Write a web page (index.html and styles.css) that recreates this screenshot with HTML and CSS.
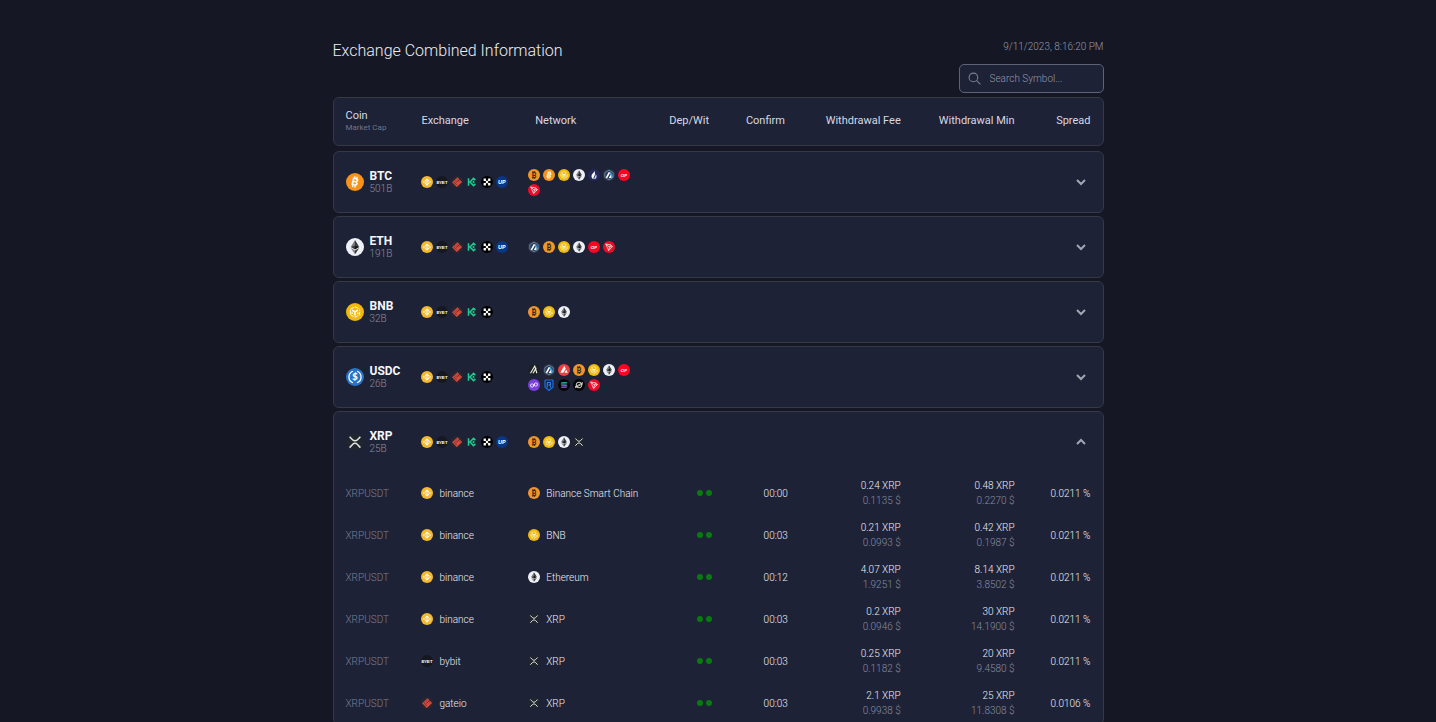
FILE: index.html
```html
<!DOCTYPE html>
<html lang="en">
<head>
<meta charset="utf-8">
<meta name="viewport" content="width=device-width, initial-scale=1">
<title>Exchange Combined Information</title>
<link rel="stylesheet" href="styles.css">
</head>
<body>
<svg class="sprite" aria-hidden="true">
  <symbol id="bitcoin" viewBox="0 0 24 24"><circle cx="12" cy="12" r="12" fill="#f7931a"/><g transform="rotate(13 12 12)" fill="#fff"><text class="mark" x="12" y="17" font-size="14">B</text><path d="M9.600 4.500h1.600v3H9.600zM12.600 4.500h1.600v3h-1.600zM9.600 16.500h1.600v3H9.600zM12.600 16.500h1.600v3h-1.600z"/></g></symbol>
  <symbol id="bsc" viewBox="0 0 24 24"><circle cx="12" cy="12" r="12" fill="#f0962b"/><g fill="#39290f"><text class="mark" x="12" y="17" font-size="14">B</text><path d="M9 4h1.800v4H9zM12.500 4h1.800v4h-1.800zM9 16h1.800v4H9zM12.500 16h1.800v4h-1.800z"/></g></symbol>
  <symbol id="bnb" viewBox="0 0 24 24"><circle cx="12" cy="12" r="12" fill="#f0b90b"/><path d="M6 8.200L12 5l6 3.200M5.800 9.500v6L12 19l6.200-3.500v-6" fill="none" stroke="#fff" stroke-width="1.300" stroke-dasharray="5 1.200"/><path d="M8 9.500l4 2.300 4-2.300M12 11.500v5M8.200 12.800v2M15.800 12.800v2" fill="none" stroke="#fff" stroke-width="2"/></symbol>
  <symbol id="ethereum" viewBox="0 0 24 24"><circle cx="12" cy="12" r="12" fill="#eef1f8"/><path d="M12 2.500L6.300 12 12 9.400z" fill="#77797c"/><path d="M12 2.500L17.700 12 12 9.400z" fill="#363739"/><path d="M6.300 12L12 9.400v6z" fill="#3b3c3d"/><path d="M17.700 12L12 9.400v6z" fill="#121314"/><path d="M6.300 13.300L12 21.500v-5z" fill="#808284"/><path d="M17.700 13.300L12 21.500v-5z" fill="#373839"/></symbol>
  <symbol id="usdc" viewBox="0 0 24 24"><circle cx="12" cy="12" r="12" fill="#2775ca"/><path d="M9.300 4.300a8.200 8.200 0 0 0 0 15.400M14.700 4.300a8.200 8.200 0 0 1 0 15.400" fill="none" stroke="#fff" stroke-width="1.700"/><text class="mark" x="12" y="16.500" font-size="12.500" fill="#fff">$</text></symbol>
  <symbol id="xrp" viewBox="0 0 24 24"><circle cx="12" cy="12" r="12" fill="#20252f"/><path d="M4.800 5l3.900 4.100a4.600 4.600 0 0 0 6.600 0L19.200 5M4.800 19.500l3.900-4.300a4.600 4.600 0 0 1 6.600 0l3.900 4.300" fill="none" stroke="#dfe5dc" stroke-width="2"/></symbol>
  <symbol id="binance" viewBox="0 0 24 24"><circle cx="12" cy="12" r="12" fill="#f3ba2f"/><path d="M8.200 10.300L12 6.500l3.800 3.800M8.200 13.700l3.800 3.800 3.800-3.800" fill="none" stroke="#fff" stroke-width="2.200"/><path d="M12 10l2 2-2 2-2-2zM6 10.200L7.800 12 6 13.800 4.200 12zM18 10.200l1.800 1.800-1.800 1.800-1.800-1.800z" fill="#fff"/></symbol>
  <symbol id="bybit" viewBox="0 0 24 24"><circle cx="12" cy="12" r="12" fill="#16181f"/><text class="mark" x="12" y="15" font-size="7.600" fill="#fff">BYB<tspan fill="#f7a600">I</tspan>T</text></symbol>
  <symbol id="gateio" viewBox="0 0 24 24"><circle cx="12" cy="12" r="12" fill="#2a2630"/><path d="M14 3.500L4 12.500l7.500 7.800 9-8.300-3-3-6.500 6-2.500-2.600L16 5.500M11.500 17.500l6-5.500" fill="none" stroke="#d94a3d" stroke-width="2.400"/></symbol>
  <symbol id="kucoin" viewBox="0 0 24 24"><circle cx="12" cy="12" r="12" fill="#1c2632"/><path d="M5 4.500v15M5.500 12h3M18.800 8.300L15 4.800 8 12l7 7.200 3.800-3.500" fill="none" stroke="#23c993" stroke-width="3"/><path d="M15 9.400l2.600 2.600-2.600 2.600-2.600-2.600z" fill="#23c993"/></symbol>
  <symbol id="okx" viewBox="0 0 24 24"><circle cx="12" cy="12" r="12" fill="#000"/><path d="M5.200 5.200h4.600v4.600H5.200zM14.200 5.200h4.600v4.600h-4.600zM9.700 9.700h4.600v4.600H9.700zM5.200 14.200h4.600v4.600H5.200zM14.200 14.200h4.600v4.600h-4.600z" fill="#fff"/></symbol>
  <symbol id="upbit" viewBox="0 0 24 24"><circle cx="12" cy="12" r="12" fill="#093687"/><text class="mark slanted" x="11.500" y="16" font-size="12" fill="#fff">UP</text></symbol>
  <symbol id="optimism" viewBox="0 0 24 24"><circle cx="12" cy="12" r="12" fill="#ff0420"/><text class="mark slanted" x="11.800" y="15.300" font-size="9" fill="#fff">OP</text></symbol>
  <symbol id="heco" viewBox="0 0 24 24"><circle cx="12" cy="12" r="12" fill="#24285a"/><path d="M12.500 3.500c.5 4-5.500 6-5.500 11 0 3 1.800 5 4 6-1-4 3-7 3-11 0-2.500-.5-4.500-1.500-6z" fill="#fff"/><path d="M15.500 10c3 4 2 9-2.500 10.500-1.500-3.500 2.800-5.500 2.500-10.500z" fill="#d6dcf5"/></symbol>
  <symbol id="arbitrum" viewBox="0 0 24 24"><circle cx="12" cy="12" r="12" fill="#2d374b"/><path d="M12 2.500l8.300 4.700v9.600L12 21.500l-8.300-4.700V7.200z" fill="#263b54" stroke="#8299b0" stroke-width="1.400"/><path d="M5.500 17L11 6.500h4L8.200 18.500zM11.300 18.500l3.800-7 3 5.200-1.500 1" fill="#fff"/><path d="M13.500 9.500l2-3 4 7.500v2.700l-1.800.8z" fill="#3fa9ee"/></symbol>
  <symbol id="tron" viewBox="0 0 24 24"><circle cx="12" cy="12" r="12" fill="#ef0a27"/><path d="M5.500 6l9.800 1.800 3.500 3.300-7.500 8zM5.500 6l7.300 6.200 6-1.100M12.800 12.200l2.500-4.400M12.800 12.200l-1.500 6.900" fill="none" stroke="#fff" stroke-width="1.400" stroke-linejoin="round"/></symbol>
  <symbol id="algorand" viewBox="0 0 24 24"><circle cx="12" cy="12" r="12" fill="#1b2028"/><path d="M5 18.500L13.500 4l4.300 14.500M10 18.500l5.500-9.300M14.300 8.500H17" fill="none" stroke="#f3f3df" stroke-width="2.200"/></symbol>
  <symbol id="avalanche" viewBox="0 0 24 24"><circle cx="12" cy="12" r="12" fill="#e84142"/><path d="M11.800 5.200c.5-.8 1.100-.8 1.600 0l1.700 3.100c.3.600.3 1 0 1.600l-3.700 6.700c-.4.700-.8.900-1.500.9H6c-.9 0-1.100-.7-.7-1.400zM15.700 12.600c.4-.6.900-.6 1.300 0l2.300 3.900c.3.600.1 1-.6 1h-4.700c-.7 0-1-.4-.6-1z" fill="#fff"/></symbol>
  <symbol id="polygon" viewBox="0 0 24 24"><circle cx="12" cy="12" r="12" fill="#7b3fdb"/><path d="M8.300 9.600l3 1.700v3.400l-3 1.800-3-1.800v-3.400zM15.700 7.500l3 1.700v3.400l-3 1.800-3-1.800V9.200zM11 14.500l2-4" fill="none" stroke="#fff" stroke-width="1.700"/></symbol>
  <symbol id="ronin" viewBox="0 0 24 24"><path d="M5 2h14l1 1v13l-8 7-8-7V3z" fill="#17233d" stroke="#1273ea" stroke-width="2.400"/><path d="M8.500 17V7h6.300v5H11m2 0l1.800 1.500V17" fill="none" stroke="#3989f5" stroke-width="2"/></symbol>
  <symbol id="solana" viewBox="0 0 24 24"><circle cx="12" cy="12" r="12" fill="#050509"/><path d="M7.500 6.500H19L16.800 9H5.300z" fill="#32d5c0"/><path d="M5.300 10.800h11.500L19 13.300H7.500z" fill="#6e9bd8"/><path d="M7.500 15H19l-2.200 2.500H5.300z" fill="#a85ce7"/></symbol>
  <symbol id="stellar" viewBox="0 0 24 24"><circle cx="12" cy="12" r="12" fill="#050505"/><circle cx="12" cy="12" r="5.700" fill="none" stroke="#e9e9e2" stroke-width="1.800"/><path d="M4 15.500L20 7M4 17.800L20 9.300" stroke="#e9e9e2" stroke-width="1.600"/></symbol>
</svg>

<main class="page">
  <header class="top">
    <h1 class="title">Exchange Combined Information</h1>
    <div class="tools">
      <time class="stamp" datetime="2023-09-11T20:16:20">9/11/2023, 8:16:20 PM</time>
      <label class="search">
        <svg class="search-icon" viewBox="0 0 24 24" aria-hidden="true"><circle cx="10" cy="10" r="8"/><path d="M16 16l7 7"/></svg>
        <input class="search-input" type="search" placeholder="Search Symbol..." aria-label="Search symbol">
      </label>
    </div>
  </header>

  <table class="market">
    <thead class="card head">
      <tr class="row">
        <th class="cell">Coin<span class="caption">Market Cap</span></th>
        <th class="cell">Exchange</th>
        <th class="cell indent">Network</th>
        <th class="cell end status">Dep/Wit</th>
        <th class="cell end status">Confirm</th>
        <th class="cell end">Withdrawal Fee</th>
        <th class="cell end">Withdrawal Min</th>
        <th class="cell end">Spread</th>
      </tr>
    </thead>
    <tbody class="card">
      <tr class="row summary">
        <td class="cell coin"><svg class="logo"><use href="#bitcoin"/></svg><div><b class="symbol">BTC</b><span class="cap">501B</span></div></td>
        <td class="cell icons"><svg class="icon"><use href="#binance"/></svg><svg class="icon"><use href="#bybit"/></svg><svg class="icon"><use href="#gateio"/></svg><svg class="icon"><use href="#kucoin"/></svg><svg class="icon"><use href="#okx"/></svg><svg class="icon"><use href="#upbit"/></svg></td>
        <td class="cell icons"><svg class="icon"><use href="#bsc"/></svg><svg class="icon"><use href="#bitcoin"/></svg><svg class="icon"><use href="#bnb"/></svg><svg class="icon"><use href="#ethereum"/></svg><svg class="icon"><use href="#heco"/></svg><svg class="icon"><use href="#arbitrum"/></svg><svg class="icon"><use href="#optimism"/></svg><svg class="icon"><use href="#tron"/></svg></td>
        <td class="cell action"><button class="toggle" type="button" aria-expanded="false" aria-label="Show BTC networks"><svg class="chevron" viewBox="0 0 12 12"><path d="M2 4l4 4 4-4"/></svg></button></td>
      </tr>
    </tbody>
    <tbody class="card">
      <tr class="row summary">
        <td class="cell coin"><svg class="logo"><use href="#ethereum"/></svg><div><b class="symbol">ETH</b><span class="cap">191B</span></div></td>
        <td class="cell icons"><svg class="icon"><use href="#binance"/></svg><svg class="icon"><use href="#bybit"/></svg><svg class="icon"><use href="#gateio"/></svg><svg class="icon"><use href="#kucoin"/></svg><svg class="icon"><use href="#okx"/></svg><svg class="icon"><use href="#upbit"/></svg></td>
        <td class="cell icons"><svg class="icon"><use href="#arbitrum"/></svg><svg class="icon"><use href="#bsc"/></svg><svg class="icon"><use href="#bnb"/></svg><svg class="icon"><use href="#ethereum"/></svg><svg class="icon"><use href="#optimism"/></svg><svg class="icon"><use href="#tron"/></svg></td>
        <td class="cell action"><button class="toggle" type="button" aria-expanded="false" aria-label="Show ETH networks"><svg class="chevron" viewBox="0 0 12 12"><path d="M2 4l4 4 4-4"/></svg></button></td>
      </tr>
    </tbody>
    <tbody class="card">
      <tr class="row summary">
        <td class="cell coin"><svg class="logo"><use href="#bnb"/></svg><div><b class="symbol">BNB</b><span class="cap">32B</span></div></td>
        <td class="cell icons"><svg class="icon"><use href="#binance"/></svg><svg class="icon"><use href="#bybit"/></svg><svg class="icon"><use href="#gateio"/></svg><svg class="icon"><use href="#kucoin"/></svg><svg class="icon"><use href="#okx"/></svg></td>
        <td class="cell icons"><svg class="icon"><use href="#bsc"/></svg><svg class="icon"><use href="#bnb"/></svg><svg class="icon"><use href="#ethereum"/></svg></td>
        <td class="cell action"><button class="toggle" type="button" aria-expanded="false" aria-label="Show BNB networks"><svg class="chevron" viewBox="0 0 12 12"><path d="M2 4l4 4 4-4"/></svg></button></td>
      </tr>
    </tbody>
    <tbody class="card">
      <tr class="row summary">
        <td class="cell coin"><svg class="logo"><use href="#usdc"/></svg><div><b class="symbol">USDC</b><span class="cap">26B</span></div></td>
        <td class="cell icons"><svg class="icon"><use href="#binance"/></svg><svg class="icon"><use href="#bybit"/></svg><svg class="icon"><use href="#gateio"/></svg><svg class="icon"><use href="#kucoin"/></svg><svg class="icon"><use href="#okx"/></svg></td>
        <td class="cell icons"><svg class="icon"><use href="#algorand"/></svg><svg class="icon"><use href="#arbitrum"/></svg><svg class="icon"><use href="#avalanche"/></svg><svg class="icon"><use href="#bsc"/></svg><svg class="icon"><use href="#bnb"/></svg><svg class="icon"><use href="#ethereum"/></svg><svg class="icon"><use href="#optimism"/></svg><svg class="icon"><use href="#polygon"/></svg><svg class="icon"><use href="#ronin"/></svg><svg class="icon"><use href="#solana"/></svg><svg class="icon"><use href="#stellar"/></svg><svg class="icon"><use href="#tron"/></svg></td>
        <td class="cell action"><button class="toggle" type="button" aria-expanded="false" aria-label="Show USDC networks"><svg class="chevron" viewBox="0 0 12 12"><path d="M2 4l4 4 4-4"/></svg></button></td>
      </tr>
    </tbody>
    <tbody class="card">
      <tr class="row summary">
        <td class="cell coin"><svg class="logo"><use href="#xrp"/></svg><div><b class="symbol">XRP</b><span class="cap">25B</span></div></td>
        <td class="cell icons"><svg class="icon"><use href="#binance"/></svg><svg class="icon"><use href="#bybit"/></svg><svg class="icon"><use href="#gateio"/></svg><svg class="icon"><use href="#kucoin"/></svg><svg class="icon"><use href="#okx"/></svg><svg class="icon"><use href="#upbit"/></svg></td>
        <td class="cell icons"><svg class="icon"><use href="#bsc"/></svg><svg class="icon"><use href="#bnb"/></svg><svg class="icon"><use href="#ethereum"/></svg><svg class="icon"><use href="#xrp"/></svg></td>
        <td class="cell action"><button class="toggle" type="button" aria-expanded="true" aria-label="Hide XRP networks"><svg class="chevron" viewBox="0 0 12 12"><path d="M2 8l4-4 4 4"/></svg></button></td>
      </tr>
      <tr class="row detail">
        <td class="cell pair">XRPUSDT</td>
        <td class="cell named"><svg class="icon"><use href="#binance"/></svg>binance</td>
        <td class="cell named"><svg class="icon"><use href="#bsc"/></svg>Binance Smart Chain</td>
        <td class="cell dots"><i class="dot"></i><i class="dot"></i></td>
        <td class="cell end">00:00</td>
        <td class="cell end">0.24 XRP<span class="usd">0.1135 $</span></td>
        <td class="cell end">0.48 XRP<span class="usd">0.2270 $</span></td>
        <td class="cell end">0.0211 %</td>
      </tr>
      <tr class="row detail">
        <td class="cell pair">XRPUSDT</td>
        <td class="cell named"><svg class="icon"><use href="#binance"/></svg>binance</td>
        <td class="cell named"><svg class="icon"><use href="#bnb"/></svg>BNB</td>
        <td class="cell dots"><i class="dot"></i><i class="dot"></i></td>
        <td class="cell end">00:03</td>
        <td class="cell end">0.21 XRP<span class="usd">0.0993 $</span></td>
        <td class="cell end">0.42 XRP<span class="usd">0.1987 $</span></td>
        <td class="cell end">0.0211 %</td>
      </tr>
      <tr class="row detail">
        <td class="cell pair">XRPUSDT</td>
        <td class="cell named"><svg class="icon"><use href="#binance"/></svg>binance</td>
        <td class="cell named"><svg class="icon"><use href="#ethereum"/></svg>Ethereum</td>
        <td class="cell dots"><i class="dot"></i><i class="dot"></i></td>
        <td class="cell end">00:12</td>
        <td class="cell end">4.07 XRP<span class="usd">1.9251 $</span></td>
        <td class="cell end">8.14 XRP<span class="usd">3.8502 $</span></td>
        <td class="cell end">0.0211 %</td>
      </tr>
      <tr class="row detail">
        <td class="cell pair">XRPUSDT</td>
        <td class="cell named"><svg class="icon"><use href="#binance"/></svg>binance</td>
        <td class="cell named"><svg class="icon"><use href="#xrp"/></svg>XRP</td>
        <td class="cell dots"><i class="dot"></i><i class="dot"></i></td>
        <td class="cell end">00:03</td>
        <td class="cell end">0.2 XRP<span class="usd">0.0946 $</span></td>
        <td class="cell end">30 XRP<span class="usd">14.1900 $</span></td>
        <td class="cell end">0.0211 %</td>
      </tr>
      <tr class="row detail">
        <td class="cell pair">XRPUSDT</td>
        <td class="cell named"><svg class="icon"><use href="#bybit"/></svg>bybit</td>
        <td class="cell named"><svg class="icon"><use href="#xrp"/></svg>XRP</td>
        <td class="cell dots"><i class="dot"></i><i class="dot"></i></td>
        <td class="cell end">00:03</td>
        <td class="cell end">0.25 XRP<span class="usd">0.1182 $</span></td>
        <td class="cell end">20 XRP<span class="usd">9.4580 $</span></td>
        <td class="cell end">0.0211 %</td>
      </tr>
      <tr class="row detail">
        <td class="cell pair">XRPUSDT</td>
        <td class="cell named"><svg class="icon"><use href="#gateio"/></svg>gateio</td>
        <td class="cell named"><svg class="icon"><use href="#xrp"/></svg>XRP</td>
        <td class="cell dots"><i class="dot"></i><i class="dot"></i></td>
        <td class="cell end">00:03</td>
        <td class="cell end">2.1 XRP<span class="usd">0.9938 $</span></td>
        <td class="cell end">25 XRP<span class="usd">11.8308 $</span></td>
        <td class="cell end">0.0106 %</td>
      </tr>
    </tbody>
  </table>
</main>
</body>
</html>
```

FILE: styles.css
```css
* { box-sizing: border-box; }

html { scrollbar-width: none; background: #151824; }

body {
  margin: 0;
  color: #eceef5;
  font-family: Roboto, "Noto Sans", sans-serif;
  font-size: 10px;
  font-weight: 300;
  line-height: 15px;
}

.sprite { display: none; }
.mark { font-family: Lato, sans-serif; font-weight: 900; text-anchor: middle; }
.slanted { font-style: italic; }

.page {
  max-width: 771px;
  margin: 0 auto;
  padding: 39px 0 24px;
}

.top {
  display: flex;
  justify-content: space-between;
  align-items: flex-start;
  margin-bottom: 4px;
}

.title {
  margin: 0;
  font-size: 16px;
  font-weight: 300;
  line-height: 24px;
}

.tools {
  display: flex;
  flex-direction: column;
  align-items: flex-end;
  gap: 10px;
}

.stamp { color: #9499ac; }

.search {
  display: flex;
  align-items: center;
  gap: 9px;
  width: 145px;
  height: 29px;
  padding: 0 8px;
  border: 1px solid #5d6277;
  border-radius: 5px;
  background: #1e2236;
}

.search-icon {
  flex: none;
  width: 13px;
  height: 13px;
  fill: none;
  stroke: #7a7f91;
  stroke-width: 2;
}

.search-input {
  width: 100%;
  min-width: 0;
  padding: 0;
  border: 0;
  outline: 0;
  background: none;
  color: #eceef5;
  font: inherit;
}

.search-input::placeholder { color: #9297aa; opacity: 1; }

.market { display: block; }

.card {
  display: block;
  margin-bottom: 3px;
  padding: 0 12px;
  border: 1px solid #343944;
  border-radius: 6px;
  background: #1e2236;
}

.row {
  display: grid;
  grid-template-columns: 76fr 107fr 111fr 73fr 76fr 113fr 114fr 76fr;
  align-items: center;
}

.cell {
  min-width: 0;
  padding: 0;
  text-align: left;
  white-space: nowrap;
}

.head { margin-bottom: 5px; }
.head .row { height: 47px; padding-bottom: 2px; }
.head .cell { color: #d6d9e4; font-size: 11px; font-weight: 400; line-height: 14px; }
.head .indent { padding-left: 7px; }
.head .status { padding-right: 3px; }

.row .end { text-align: right; }

.head .caption {
  display: block;
  color: #6f7486;
  font-size: 8px;
  line-height: 10px;
}

.summary { height: 60px; }

.coin { display: flex; align-items: center; gap: 6px; }
.logo { flex: none; width: 18px; height: 18px; }
.symbol { display: block; color: #f5f6fa; font-size: 12px; font-weight: 700; line-height: 13px; }
.cap { display: block; color: #888da0; line-height: 12px; }

.icons { display: flex; flex-wrap: wrap; gap: 3px; }
.icon { flex: none; width: 12px; height: 12px; }

.action { grid-column: 4 / -1; display: flex; justify-content: flex-end; }

.toggle {
  display: flex;
  margin-right: 4px;
  padding: 0;
  border: 0;
  background: none;
  cursor: pointer;
}

.chevron { width: 12px; height: 12px; fill: none; stroke: #a2a6b2; stroke-width: 2; }

.detail { height: 42px; }
.pair { color: #7b8094; }
.named { display: flex; align-items: center; gap: 6px; }
.usd { display: block; color: #888da0; }

.dots { display: flex; justify-content: flex-end; gap: 3px; }
.dot { width: 6px; height: 6px; border-radius: 50%; background: #087a10; }
```
